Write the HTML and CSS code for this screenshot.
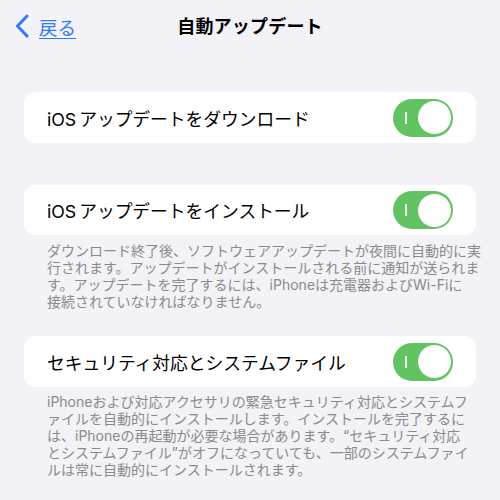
FILE: index.html
```html
<!DOCTYPE html>
<html lang="ja">
<head>
<meta charset="utf-8">
<title>自動アップデート</title>
<link rel="stylesheet" href="styles.css">
</head>
<body>
<header class="nav">
  <a class="back" href="#">
    <svg class="chev" width="14" height="24" viewBox="0 0 14 24"><path d="M12 2 L2.5 12 L12 22" fill="none" stroke="#3478f6" stroke-width="3" stroke-linecap="round" stroke-linejoin="round"/></svg>
    <span class="back-label">戻る</span>
  </a>
  <h1 class="title">自動アップデート</h1>
  <span></span>
</header>
<main class="content">
  <section class="group g1">
    <div class="card">
      <span class="label"><span class="latin">iOS</span>アップデートをダウンロード</span>
      <span class="toggle"><span class="mark"></span><span class="knob"></span></span>
    </div>
  </section>
  <section class="group g2">
    <div class="card">
      <span class="label"><span class="latin">iOS</span>アップデートをインストール</span>
      <span class="toggle"><span class="mark"></span><span class="knob"></span></span>
    </div>
    <p class="footer">ダウンロード終了後、ソフトウェアアップデートが夜間に自動的に実<br>行されます。アップデートがインストールされる前に通知が送られま<br>す。アップデートを完了するには、iPhoneは充電器およびWi-Fiに<br>接続されていなければなりません。</p>
  </section>
  <section class="group g3">
    <div class="card">
      <span class="label">セキュリティ対応とシステムファイル</span>
      <span class="toggle"><span class="mark"></span><span class="knob"></span></span>
    </div>
    <p class="footer">iPhoneおよび対応アクセサリの緊急セキュリティ対応とシステムフ<br>ァイルを自動的にインストールします。インストールを完了するに<br>は、iPhoneの再起動が必要な場合があります。“セキュリティ対応<br>とシステムファイル”がオフになっていても、一部のシステムファイ<br>ルは常に自動的にインストールされます。</p>
  </section>
</main>
</body>
</html>
```
FILE: styles.css
```css
html, body {
  margin: 0;
  padding: 0;
}
body {
  background: #f2f2f7;
  font-family: "Inter", "Noto Sans CJK JP", sans-serif;
  color: #000;
  width: 500px;
  height: 500px;
  overflow: hidden;
}
.nav {
  height: 50px;
  display: grid;
  grid-template-columns: 1fr auto 1fr;
  align-items: center;
  padding: 0 0 0 15px;
}
.back {
  display: flex;
  align-items: center;
  gap: 10px;
  color: #3478f6;
  text-decoration: none;
  margin-top: 1px;
}
.chev {
  display: block;
}
.back-label {
  font-size: 18.5px;
  text-decoration: underline;
  text-underline-offset: 3px;
  text-decoration-thickness: 1px;
  margin-top: 2px;
}
.title {
  margin: 0;
  font-size: 18px;
  font-weight: 700;
  letter-spacing: 0.2px;
  margin-left: -15px;
}
.content {
  padding: 0 24px;
}
.group {
  margin: 0;
}
.g1 { margin-top: 42px; }
.g2 { margin-top: 42px; }
.g3 { margin-top: 26px; }
.card {
  background: #fff;
  border-radius: 11px;
  height: 51px;
  display: flex;
  align-items: center;
  justify-content: space-between;
  padding: 0 23px 0 23px;
}
.g2 .card { height: 50px; }
.label {
  font-size: 17.8px;
  letter-spacing: -0.05px;
}
.latin {
  margin-right: 3px;
}
.toggle {
  position: relative;
  width: 60px;
  height: 38px;
  border-radius: 19px;
  background: #62c363;
  flex: none;
}
.mark {
  position: absolute;
  left: 12px;
  top: 13px;
  width: 1.5px;
  height: 12px;
  background: rgba(255,255,255,0.85);
}
.knob {
  position: absolute;
  right: 2.5px;
  top: 2.5px;
  width: 33px;
  height: 33px;
  border-radius: 50%;
  background: #fff;
}
.footer {
  margin: 0;
  padding: 7px 0 0 23px;
  font-size: 14px;
  line-height: 17px;
  color: #8a8a8e;
  white-space: nowrap;
}
.g3 .footer { padding-top: 6px; }
```
